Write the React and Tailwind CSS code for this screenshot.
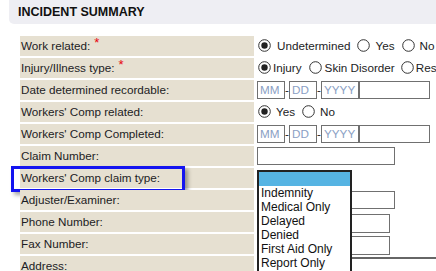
const Radio = ({ checked }) => (
  <svg width="13" height="13" viewBox="0 0 13 13" className="shrink-0">
    <circle cx="6.5" cy="6.5" r="5.8" fill="#fff" stroke="#333" strokeWidth="1" />
    {checked && <circle cx="6.5" cy="6.5" r="3.2" fill="#222" />}
  </svg>
);

const DateField = () => (
  <div className="flex items-center h-[18px]">
    <div className="w-[28px] h-full border border-[#707070] text-[#8aa0c4] pl-[2px] leading-[16px]">MM</div>
    <span className="w-[4px] text-center leading-none">-</span>
    <div className="w-[28px] h-full border border-[#707070] text-[#8aa0c4] pl-[2px] leading-[16px]">DD</div>
    <span className="w-[4px] text-center leading-none">-</span>
    <div className="w-[39px] h-full border border-[#707070] border-r-2 text-[#8aa0c4] pl-[2px] leading-[16px]">YYYY</div>
    <div className="w-[70px] h-full border border-l-0 border-[#707070]" />
  </div>
);

const Row = ({ label, required, children, highlight }) => (
  <div className="flex h-[20px]">
    <div className="relative w-[234px] shrink-0 bg-[#e6e0d1] pl-[1px] flex items-center">
      <span>{label}</span>
      {required && <span className="text-red-600 ml-[4px] relative -top-[4px] text-[13px] leading-none">*</span>}
      {highlight && (
        <div className="absolute -left-[9px] -top-[2px] w-[174px] h-[26px] border-[3px] border-[#1414f0] shadow-[3px_3px_4px_rgba(0,0,0,0.35)]" />
      )}
    </div>
    <div className="relative flex-1 flex items-center pl-[4px] whitespace-nowrap">{children}</div>
  </div>
);

const options = ["Indemnity", "Medical Only", "Delayed", "Denied", "First Aid Only", "Report Only"];

export default function App() {
  return (
    <div
      className="w-[436px] h-[271px] overflow-hidden bg-white text-[#1c1c24] text-[11.7px]"
      style={{ fontFamily: '"Liberation Sans", Arial, sans-serif' }}
    >
      <div className="ml-[9px] h-[24px] bg-[#eeeef3] rounded-bl-[5px] pl-[9px] flex items-center font-bold text-[12.5px] text-[#111]">
        INCIDENT SUMMARY
      </div>

      <div className="mt-[12px] ml-[20px] flex flex-col gap-[2px]">
        <Row label="Work related:" required>
          <div className="flex items-center">
            <Radio checked />
            <span className="ml-[6px]">Undetermined</span>
            <span className="ml-[7px]"><Radio /></span>
            <span className="ml-[5px]">Yes</span>
            <span className="ml-[7px]"><Radio /></span>
            <span className="ml-[5px]">No</span>
          </div>
        </Row>
        <Row label="Injury/Illness type:" required>
          <div className="flex items-center">
            <Radio checked />
            <span className="ml-[2px]">Injury</span>
            <span className="ml-[7px]"><Radio /></span>
            <span className="ml-[3px]">Skin Disorder</span>
            <span className="ml-[6px]"><Radio /></span>
            <span className="ml-[2px]">Res</span>
          </div>
        </Row>
        <Row label="Date determined recordable:">
          <div className="-ml-[1px]"><DateField /></div>
        </Row>
        <Row label="Workers' Comp related:">
          <div className="flex items-center">
            <Radio checked />
            <span className="ml-[5px]">Yes</span>
            <span className="ml-[7px]"><Radio /></span>
            <span className="ml-[5px]">No</span>
          </div>
        </Row>
        <Row label="Workers' Comp Completed:">
          <div className="-ml-[1px]"><DateField /></div>
        </Row>
        <Row label="Claim Number:">
          <div className="-ml-[1px] w-[138px] h-[18px] border border-[#707070]" />
        </Row>
        <Row label="Workers' Comp claim type:" highlight>
          <div className="absolute left-[3px] top-[2px] z-10 w-[95px] h-[104px] border-2 border-[#222] bg-white text-[12px] text-[#111]">
            <div className="h-[14px] bg-[#56b4e3]" />
            {options.map((o) => (
              <div key={o} className="h-[14px] leading-[14px] pl-[2px]">{o}</div>
            ))}
          </div>
        </Row>
        <Row label="Adjuster/Examiner:">
          <div className="-ml-[1px] w-[138px] h-[18px] border border-[#707070]" />
        </Row>
        <Row label="Phone Number:">
          <div className="-ml-[1px] mt-[2px] w-[133px] h-[19px] border border-[#707070]" />
        </Row>
        <Row label="Fax Number:">
          <div className="-ml-[1px] mt-[2px] w-[133px] h-[19px] border border-[#707070]" />
        </Row>
        <Row label="Address:">
          <div className="absolute left-[3px] top-[1px] w-[240px] h-[12px] border-t-2 border-x border-[#666]" />
        </Row>
      </div>
    </div>
  );
}
